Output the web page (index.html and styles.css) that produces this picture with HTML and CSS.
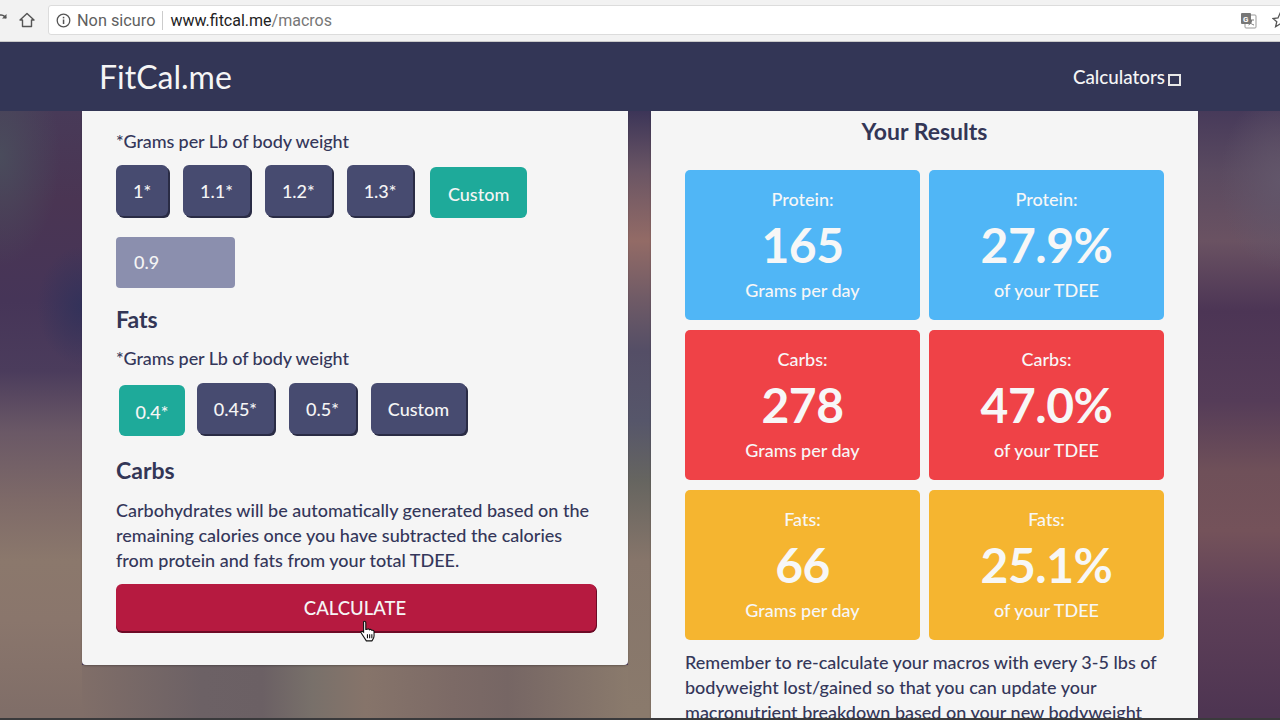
FILE: index.html
```html
<!DOCTYPE html>
<html lang="en">
<head>
    <meta charset="UTF-8">
    <title>FitCal.me - Macros</title>
    <link rel="stylesheet" href="styles.css">
</head>
<body>
    <div class="browser-bar">
        <svg class="reload-icon" width="8" height="16" viewBox="0 0 8 16"><path d="M-4 8a5 5 0 0 1 8.500-3.600L6 6" fill="none" stroke="#555" stroke-width="1.500"/><path d="M6.500 2v4.500H2z" fill="#555"/></svg>
        <svg class="home-icon" width="16" height="16" viewBox="0 0 16 16"><path d="M1 8l7-6.500L15 8h-2.500v6.500h-9V8z" fill="none" stroke="#555" stroke-width="1.400" stroke-linejoin="round"/></svg>
        <div class="address">
            <svg width="15" height="15" viewBox="0 0 15 15"><circle cx="7.500" cy="7.500" r="6.300" fill="none" stroke="#555" stroke-width="1.300"/><rect x="6.800" y="6.500" width="1.500" height="4.500" fill="#555"/><rect x="6.800" y="3.800" width="1.500" height="1.600" fill="#555"/></svg>
            <span class="secure">Non sicuro</span>
            <span class="divider"></span>
            <span class="url">www.fitcal.me<span class="url-path">/macros</span></span>
            <svg class="translate-icon" width="17" height="17" viewBox="0 0 17 17"><rect x="5" y="3" width="11" height="13" rx="1" fill="#fff" stroke="#999"/><rect x="1" y="1" width="10" height="11" rx="1" fill="#777"/><text x="3" y="10" class="translate-text">G</text><path d="M9 8h5M11.500 8v1c0 2-1.500 3.500-3 4M10 10c1 1.500 2 2.500 4 3" fill="none" stroke="#777"/></svg>
            <svg class="star-icon" width="16" height="16" viewBox="0 0 16 16"><path d="M8 1.500l2 4.500 5 .5-3.800 3.200 1.200 5L8 12l-4.400 2.700 1.200-5L1 6.500 6 6z" fill="none" stroke="#555" stroke-width="1.300"/></svg>
        </div>
    </div>

    <nav class="navbar">
        <div class="brand">FitCal.me</div>
        <div class="nav-menu">Calculators <span class="missing-glyph"></span></div>
    </nav>

    <main class="columns">
        <section class="card card-form">
            <p class="hint">*Grams per Lb of body weight</p>
            <div class="btn-row">
                <button class="btn">1*</button>
                <button class="btn">1.1*</button>
                <button class="btn">1.2*</button>
                <button class="btn">1.3*</button>
                <button class="btn btn-active btn-gap">Custom</button>
            </div>
            <div class="custom-input">0.9</div>

            <h3 class="form-title">Fats</h3>
            <p class="hint">*Grams per Lb of body weight</p>
            <div class="btn-row btn-row-fats">
                <button class="btn btn-active">0.4*</button>
                <button class="btn">0.45*</button>
                <button class="btn">0.5*</button>
                <button class="btn">Custom</button>
            </div>

            <h3 class="form-title form-title-carbs">Carbs</h3>
            <p class="carbs-text">Carbohydrates will be automatically generated based on the remaining calories once you have subtracted the calories from protein and fats from your total TDEE.</p>

            <button class="btn-calculate">CALCULATE</button>
            <svg class="cursor" width="18" height="22" viewBox="0 0 16 20"><path d="M4 1.500c1-.8 2 0 2 1v6l1 0c1-.8 2-.5 2.300.3 1-.6 2-.2 2.200.6 1-.4 2 .2 2 1.200v3.900c0 2-1 3-2 4.500H6.500L2 12c-.8-1-.5-2 .8-1.800L4 11V3z" fill="#fff" stroke="#111" stroke-width="1"/><path d="M7.500 13v3.500M9.500 13v3.500M11.500 13v3.500" stroke="#111"/></svg>
        </section>

        <section class="card card-results">
            <h2 class="results-title">Your Results</h2>
            <div class="results-grid">
                <div class="tile tile-blue">
                    <div class="tile-label">Protein:</div>
                    <div class="tile-value">165</div>
                    <div class="tile-label">Grams per day</div>
                </div>
                <div class="tile tile-blue">
                    <div class="tile-label">Protein:</div>
                    <div class="tile-value">27.9%</div>
                    <div class="tile-label">of your TDEE</div>
                </div>
                <div class="tile tile-red">
                    <div class="tile-label">Carbs:</div>
                    <div class="tile-value">278</div>
                    <div class="tile-label">Grams per day</div>
                </div>
                <div class="tile tile-red">
                    <div class="tile-label">Carbs:</div>
                    <div class="tile-value">47.0%</div>
                    <div class="tile-label">of your TDEE</div>
                </div>
                <div class="tile tile-yellow">
                    <div class="tile-label">Fats:</div>
                    <div class="tile-value">66</div>
                    <div class="tile-label">Grams per day</div>
                </div>
                <div class="tile tile-yellow">
                    <div class="tile-label">Fats:</div>
                    <div class="tile-value">25.1%</div>
                    <div class="tile-label">of your TDEE</div>
                </div>
            </div>
            <p class="results-note">Remember to re-calculate your macros with every 3-5 lbs of bodyweight lost/gained so that you can update your macronutrient breakdown based on your new bodyweight</p>
        </section>
    </main>

    <div class="frame-edge"></div>
</body>
</html>
```
FILE: styles.css
```css
* {
    margin: 0;
    padding: 0;
    box-sizing: border-box;
}

html, body {
    height: 720px;
    overflow: hidden;
}

/* blurred photo behind the cards: only the strips around them show */
body {
    font-family: 'Lato', 'Liberation Sans', sans-serif;
    font-weight: 500;
    background-color: #4e3a58;
    background-repeat: no-repeat;
    background-image:
        /* band under the left card */
        linear-gradient(90deg, #806e68 0%, #6c6165 22%, #6b6064 33%, #78706a 42%, #86746a 52%, #7c6a66 68%, #766664 78%, #8a7a6c 100%),
        /* gutter between the cards */
        linear-gradient(180deg, #3c3558 0, #6a5564 60px, #936b66 130px, #6e5a66 190px, #544e66 240px, #56566a 310px, #666560 370px, #86756a 450px, #8a7a6c 600px),
        /* left strip */
        radial-gradient(ellipse 60px 110px at 0px 45px, #4a4c5c 0%, rgba(74, 76, 92, 0) 100%),
        radial-gradient(ellipse 45px 60px at 82px 195px, #33325a 0%, rgba(51, 50, 90, 0) 100%),
        linear-gradient(180deg, #483a58 0, #4a3553 90px, #463558 190px, #4b3c5c 260px, #6a5866 320px, #7e6a68 390px, #8b786c 450px, #8a766c 510px, #806e68 600px),
        /* right strip */
        radial-gradient(ellipse 60px 90px at 82px 70px, #62566a 0%, rgba(98, 86, 106, 0) 100%),
        linear-gradient(180deg, #473a5a 0, #5a4a60 60px, #6a5262 130px, #4c3555 200px, #553c58 290px, #6f5059 360px, #74525a 420px, #5f4058 490px, #4e3552 600px);
    background-size:
        546px 55px,
        23px 609px,
        82px 609px,
        82px 609px,
        82px 609px,
        82px 609px,
        82px 609px;
    background-position:
        82px 665px,
        628px 111px,
        0 111px,
        0 111px,
        0 111px,
        1198px 111px,
        1198px 111px;
}

.browser-bar {
    height: 42px;
    padding-bottom: 1px;
    background: #f2f2f2;
    border-bottom: 1px solid #c9c9c9;
    display: flex;
    align-items: center;
}

.home-icon {
    margin-left: 11px;
}

.address {
    margin-left: 13px;
    margin-right: -20px;
    flex: 1;
    height: 30px;
    background: white;
    border: 1px solid #dcdcdc;
    border-radius: 3px;
    display: flex;
    align-items: center;
    padding-left: 7px;
    font-size: 16px;
    font-family: 'Roboto', 'Liberation Sans', sans-serif;
    font-weight: 400;
}

.secure {
    color: #5f5f5f;
    font-size: 16.300px;
    margin-left: 6px;
}

.divider {
    width: 1px;
    height: 19px;
    background: #ccc;
    margin: 0 7px;
}

.url {
    color: #222;
}

.url-path {
    color: #777;
}

.translate-icon {
    margin-left: auto;
    margin-right: 15px;
}

.translate-text {
    font-size: 8px;
    font-weight: 700;
    fill: white;
}

.star-icon {
    margin-right: 11px;
    flex-shrink: 0;
}

.navbar {
    height: 69px;
    background: #333656;
    color: #f5f5f5;
    display: flex;
    align-items: center;
    justify-content: space-between;
    padding: 0 99px;
}

.brand {
    font-size: 32px;
    font-weight: 400;
}

.nav-menu {
    font-size: 18.800px;
    display: flex;
    align-items: center;
    gap: 3px;
}

.missing-glyph {
    width: 13px;
    height: 12px;
    border: 2px solid #e8e8e8;
    margin-top: 6px;
}

.columns {
    display: grid;
    grid-template-columns: 546px 547px;
    gap: 23px;
    padding-left: 82px;
    align-items: start;
}

.card {
    background: #f5f5f5;
    border-radius: 0 0 4px 4px;
    color: #333656;
    box-shadow: 0 1px 2px rgba(0, 0, 0, 0.25);
}

.card-form {
    height: 554px;
    padding: 18px 34px 0;
    position: relative;
}

.hint {
    font-size: 18px;
    line-height: 25px;
    letter-spacing: -0.100px;
    color: #34375a;
}

.btn-row {
    display: flex;
    align-items: flex-end;
    gap: 13px;
    margin-top: 11px;
}

.btn-row-fats {
    margin-top: 12px;
    padding-left: 3px;
}

.btn {
    height: 51px;
    padding: 0 17px;
    margin-right: 2px;
    margin-bottom: 2px;
    background: #474b70;
    color: #f5f5f5;
    border: none;
    border-radius: 6px;
    box-shadow: 2px 2px 0 #2a2c45;
    font-family: 'Lato', sans-serif;
    font-size: 18px;
    font-weight: 500;
}

.btn-active {
    margin-right: -1px;
    margin-bottom: 0;
    padding: 2px 16.500px 0;
    background: #1eaa9a;
    box-shadow: none;
}

.btn-gap {
    margin-left: 2px;
    padding: 2px 17.500px 0;
}

.custom-input {
    width: 119px;
    height: 51px;
    margin-top: 19px;
    background: #8b8fae;
    color: #f5f5f5;
    border-radius: 4px;
    font-size: 18px;
    line-height: 51px;
    padding-left: 18px;
}

.form-title {
    font-size: 23px;
    font-weight: 700;
    line-height: 28px;
    margin-top: 17px;
    margin-bottom: 13px;
}

.form-title-carbs {
    margin-top: 20px;
    margin-bottom: 14px;
}

.carbs-text {
    font-size: 18px;
    line-height: 25px;
    color: #34375a;
}

.btn-calculate {
    display: block;
    width: 480px;
    height: 47px;
    margin-top: 11px;
    padding-right: 2px;
    background: #b61a40;
    color: #f5f5f5;
    border: none;
    border-radius: 6px;
    box-shadow: 0 2px 0 #6d0a26, 1px 1px 0 #6d0a26;
    font-family: 'Lato', sans-serif;
    font-size: 18.500px;
    font-weight: 500;
}

.cursor {
    position: absolute;
    left: 277px;
    top: 509px;
}

.card-results {
    height: 700px;
    padding: 0 34px;
}

.results-title {
    font-size: 23px;
    font-weight: 700;
    line-height: 40px;
    text-align: center;
}

.results-grid {
    display: grid;
    grid-template-columns: 235px 235px;
    gap: 10px 9px;
    margin-top: 19px;
}

.tile {
    height: 150px;
    border-radius: 5px;
    color: #f7f7f7;
    text-align: center;
    padding-top: 17px;
}

.tile-blue {
    background: #50b6f6;
}

.tile-red {
    background: #ef4247;
}

.tile-yellow {
    background: #f5b530;
}

.tile-label {
    font-size: 18px;
    line-height: 24px;
}

.tile-value {
    font-size: 48px;
    font-weight: 700;
    line-height: 66px;
    padding-top: 1px;
    letter-spacing: -0.500px;
}

.results-note {
    font-size: 18px;
    line-height: 25px;
    margin-top: 10px;
    color: #34375a;
}

/* dark line at the very bottom of the capture */
.frame-edge {
    position: fixed;
    left: 0;
    right: 0;
    bottom: 0;
    height: 2px;
    background: #3a3a3c;
}
```
